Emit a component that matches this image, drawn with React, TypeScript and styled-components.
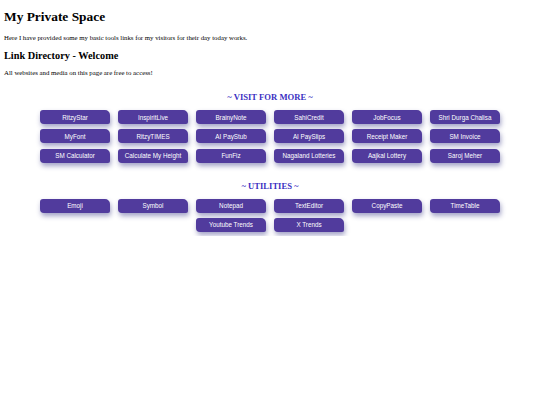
import React from "react";
import styled, { createGlobalStyle } from "styled-components";

const GlobalStyle = createGlobalStyle`
  body {
    margin: 0;
    padding: 4px;
    font-family: "Liberation Serif", "Times New Roman", serif;
    color: #000;
    background: #fff;
  }
`;

const visitLinks = [
  "RitzyStar",
  "InspiritLive",
  "BrainyNote",
  "SahiCredit",
  "JobFocus",
  "Shri Durga Chalisa",
  "MyFont",
  "RitzyTIMES",
  "AI PayStub",
  "AI PaySlips",
  "Receipt Maker",
  "SM Invoice",
  "SM Calculator",
  "Calculate My Height",
  "FunFiz",
  "Nagaland Lotteries",
  "Aajkal Lottery",
  "Saroj Meher",
];

const utilityLinks = [
  "Emoji",
  "Symbol",
  "Notepad",
  "TextEditor",
  "CopyPaste",
  "TimeTable",
  "Youtube Trends",
  "X Trends",
];

const Title = styled.h1`
  font-size: 13.4px;
  font-weight: bold;
  margin: 5px 0 9px;
`;

const Text = styled.p`
  font-size: 6.8px;
  margin: 0 0 9px;
`;

const SubTitle = styled.h2`
  font-size: 10.3px;
  font-weight: bold;
  margin: 0 0 8px;
`;

const SectionTitle = styled.h3<{ $top: number }>`
  font-size: 8.6px;
  font-weight: bold;
  color: #3a2fc2;
  text-align: center;
  margin: ${(p) => p.$top}px 0 8px;
`;

const LinkGrid = styled.div`
  display: flex;
  flex-wrap: wrap;
  justify-content: center;
  gap: 5.3px 8px;
`;

const LinkButton = styled.a`
  width: 70px;
  height: 14px;
  display: flex;
  align-items: center;
  justify-content: center;
  background: #513b9d;
  color: #fff;
  font-family: "Liberation Sans", Arial, sans-serif;
  font-size: 6.3px;
  text-decoration: none;
  border-radius: 3px 5px 2px 4px;
  box-shadow: 1px 3px 5px rgba(50, 50, 130, 0.45);
  white-space: nowrap;
`;

export default function App() {
  return (
    <>
      <GlobalStyle />
      <Title>My Private Space</Title>
      <Text>
        Here I have provided some my basic tools links for my visitors for
        their day today works.
      </Text>
      <SubTitle>Link Directory - Welcome</SubTitle>
      <Text>All websites and media on this page are free to access!</Text>

      <SectionTitle $top={16}>~ VISIT FOR MORE ~</SectionTitle>
      <LinkGrid>
        {visitLinks.map((name) => (
          <LinkButton key={name} href="#">
            {name}
          </LinkButton>
        ))}
      </LinkGrid>

      <SectionTitle $top={18}>~ UTILITIES ~</SectionTitle>
      <LinkGrid>
        {utilityLinks.map((name) => (
          <LinkButton key={name} href="#">
            {name}
          </LinkButton>
        ))}
      </LinkGrid>
    </>
  );
}
